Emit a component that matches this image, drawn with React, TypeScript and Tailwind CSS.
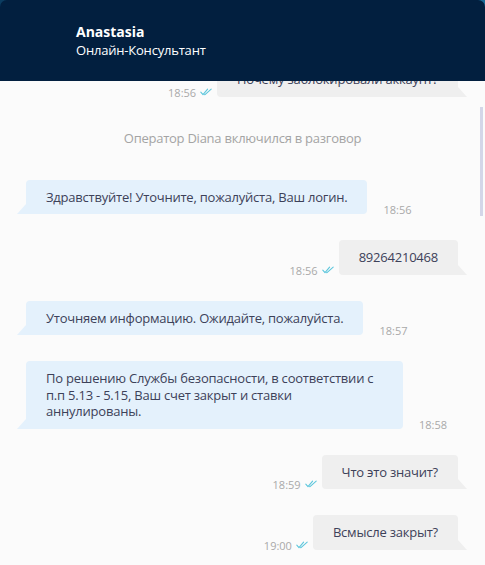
import React from "react"

type Msg =
  | { kind: "op"; text: React.ReactNode; time: string; wide?: boolean }
  | { kind: "me"; text: string; time: string }
  | { kind: "sys"; text: string }

const messages: Msg[] = [
  { kind: "sys", text: "Оператор Diana включился в разговор" },
  { kind: "op", text: "Здравствуйте! Уточните, пожалуйста, Ваш логин.", time: "18:56" },
  { kind: "me", text: "89264210468", time: "18:56" },
  { kind: "op", text: "Уточняем информацию. Ожидайте, пожалуйста.", time: "18:57" },
  {
    kind: "op",
    wide: true,
    text: (
      <>
        По решению Службы безопасности, в соответствии с
        <br />
        п.п 5.13 - 5.15, Ваш счет закрыт и ставки
        <br />
        аннулированы.
      </>
    ),
    time: "18:58",
  },
  { kind: "me", text: "Что это значит?", time: "18:59" },
  { kind: "me", text: "Всмысле закрыт?", time: "19:00" },
]

const DoubleCheck = () => (
  <svg width="12" height="8" viewBox="0 0 12 8" fill="none" className="shrink-0">
    <path d="M0.8 4.2L3 6.6L7.6 1.2" stroke="#5cc6dc" strokeWidth="1.1" strokeLinecap="round" strokeLinejoin="round" />
    <path d="M4.6 6.6L5 6.6L11.2 1.2" stroke="#5cc6dc" strokeWidth="1.1" strokeLinecap="round" strokeLinejoin="round" />
  </svg>
)

const OperatorRow = ({ text, time, wide }: { text: React.ReactNode; time: string; wide?: boolean }) => (
  <div className="flex items-end pl-[26px]">
    <div
      className={`relative rounded-[4px] rounded-bl-none bg-[#e4f1fc] px-5 py-[9px] text-[13px] leading-[16.5px] tracking-[-0.22px] text-[#3d4159] ${wide ? "w-[377px]" : ""}`}
    >
      <svg width="9" height="10" viewBox="0 0 9 10" className="absolute bottom-0 left-[-9px]">
        <polygon points="9,0 0,10 9,10" fill="#e4f1fc" />
      </svg>
      {text}
    </div>
    <span className="mb-[-1px] ml-4 text-[11px] leading-none text-[#a9a9a9]">{time}</span>
  </div>
)

const MyRow = ({ text, time, className = "" }: { text: string; time: string; className?: string }) => (
  <div className={`flex items-end justify-end pr-[27px] ${className}`}>
    <span className="mb-[-1px] text-[11px] leading-none text-[#a9a9a9]">{time}</span>
    <span className="mb-[1px] ml-1 mr-[5px]">
      <DoubleCheck />
    </span>
    <div className="relative rounded-[4px] rounded-br-none bg-[#efefef] px-5 py-[9px] text-[13px] leading-[16.5px] tracking-[-0.22px] text-[#3d4159]">
      <svg width="9" height="10" viewBox="0 0 9 10" className="absolute bottom-0 right-[-9px]">
        <polygon points="0,0 9,10 0,10" fill="#efefef" />
      </svg>
      {text}
    </div>
  </div>
)

export default function App() {
  return (
    <div
      className="flex h-[565px] w-[485px] flex-col bg-gradient-to-r from-[#0b3c60] to-[#1a6b97]"
      style={{ fontFamily: '"Open Sans", "Noto Sans", sans-serif' }}
    >
      <header className="h-[81px] shrink-0 rounded-t-[7px] bg-[#021f3f] pl-[76px] pt-[23px] text-white">
        <div className="text-[14px] font-bold leading-[18px]">Anastasia</div>
        <div className="text-[13px] leading-[18px] tracking-[-0.2px]">Онлайн-Консультант</div>
      </header>

      <div className="relative flex-1 overflow-hidden bg-[#fbfbfb]">
        <MyRow className="mt-[-19px]" text="Почему заблокировали аккаунт?" time="18:56" />

        <div className="mt-[33px] flex flex-col gap-[26px]">
          {messages.map((m, i) => {
            if (m.kind === "sys")
              return (
                <p key={i} className="mb-[7px] text-center text-[13px] leading-[17px] tracking-[-0.25px] text-[#a4a4a4]">
                  {m.text}
                </p>
              )
            if (m.kind === "op") return <OperatorRow key={i} text={m.text} time={m.time} wide={m.wide} />
            return <MyRow key={i} text={m.text} time={m.time} />
          })}
        </div>

        {/* scrollbar thumb */}
        <div className="absolute right-[2px] top-[26px] h-[109px] w-[3px] bg-[#d4d6e8]" />
      </div>
    </div>
  )
}
